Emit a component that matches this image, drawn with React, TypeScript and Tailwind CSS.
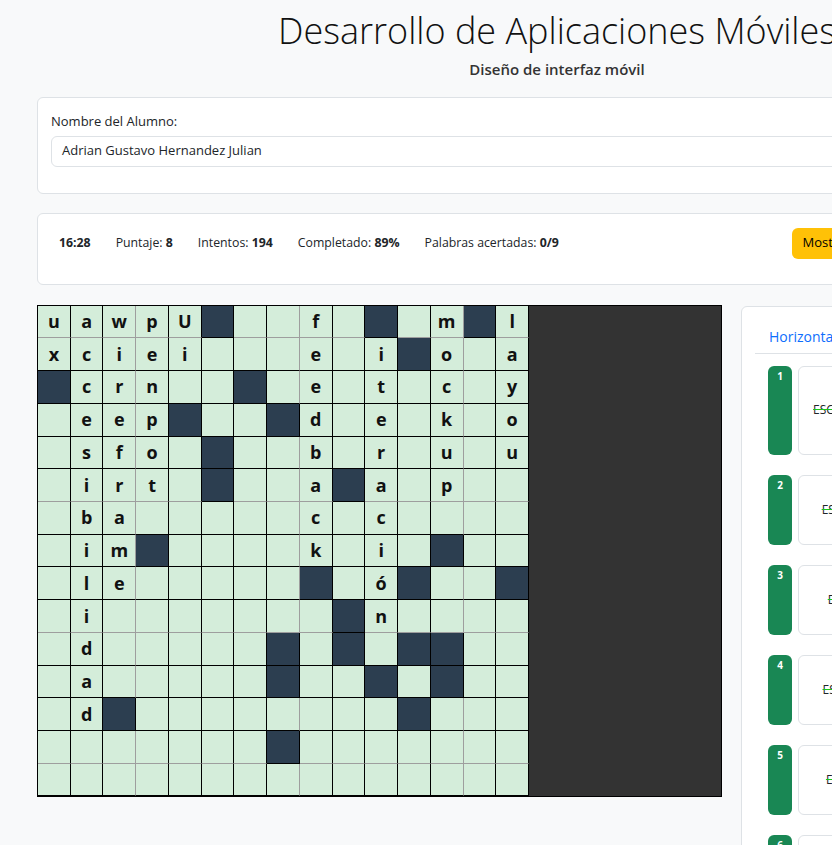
import React from "react"

const rows = [
  "uawpU#__f_#_m#l",
  "xciei___e_i#o_a",
  "#crn__#_e_t_c_y",
  "_eep#__#d_e_k_o",
  "_sfo_#__b_r_u_u",
  "_irt_#__a#a_p__",
  "_ba_____c_c____",
  "_im#____k_i_#__",
  "_le_____#_ó#__#",
  "_i_______#n____",
  "_d_____#_#_##__",
  "_a_____#__#_#__",
  "_d#________#___",
  "_______#_______",
  "_______________",
]

// lines that the browser draws lighter in the original
const grayCols = [2, 7, 12]
const grayRows = [0, 5, 9, 13]

const clues = [
  { n: 1, text: "ESCENARIOS DE PRUEBAS CON USUARIOS", tall: true },
  { n: 2, text: "ESTRUCTURA GRÁFICA DE LA INTERFAZ", tall: false },
  { n: 3, text: "ELEMENTOS DE LA EXPERIENCIA (UX)", tall: false },
  { n: 4, text: "ESQUEMA BÁSICO DE CADA PANTALLA", tall: false },
  { n: 5, text: "ESBOZO INICIAL DE UNA APLICACIÓN", tall: false },
  { n: 6, text: "ELEMENTO VISUAL", tall: false },
]

const Cell: React.FC<{ ch: string; r: number; c: number }> = ({ ch, r, c }) => {
  const dark = ch === "#"
  const right = !dark && grayCols.includes(c) ? "border-r-[#9e9e9e]" : "border-r-black"
  const bottom = !dark && grayRows.includes(r) ? "border-b-[#9e9e9e]" : "border-b-black"
  return (
    <div
      className={`h-[32.73px] border-r border-b ${right} ${bottom} flex items-center justify-center text-[18px] font-bold text-[#111] ${
        dark ? "bg-[#2c3e50]" : "bg-[#d4edda]"
      }`}
    >
      {ch === "#" || ch === "_" ? "" : ch}
    </div>
  )
}

const App: React.FC = () => {
  return (
    <div
      className="w-screen h-screen overflow-hidden bg-[#f8f9fa] text-[#212529]"
      style={{ fontFamily: '"Open Sans", "Noto Sans", sans-serif' }}
    >
      <div className="w-[1114px] px-[37px]">
        <div className="text-center pt-[9px]">
          <h1 className="text-[36px] font-light leading-[1.2] text-[#111]">
            Desarrollo de Aplicaciones Móviles
          </h1>
          <p className="mt-[6px] text-[15px] font-semibold text-[#333]">Diseño de interfaz móvil</p>
        </div>

        <div className="mt-[16px] bg-white border border-[#dee2e6] rounded-md px-[13px] pt-[13px] pb-[26px]">
          <label className="block text-[13px] leading-[21px] mb-[4px]">Nombre del Alumno:</label>
          <div className="h-[31px] border border-[#dee2e6] rounded-md flex items-center px-[10px] text-[13px]">
            Adrian Gustavo Hernandez Julian
          </div>
        </div>

        <div className="mt-[19px] bg-white border border-[#dee2e6] rounded-md px-[13px] pt-[14px] pb-[25px]">
          <div className="flex items-center h-[31px]">
            <div className="flex items-center gap-[25px] pl-[8px] text-[12.3px]">
              <span className="font-bold">16:28</span>
              <span>
                Puntaje: <b>8</b>
              </span>
              <span>
                Intentos: <b>194</b>
              </span>
              <span>
                Completado: <b>89%</b>
              </span>
              <span>
                Palabras acertadas: <b>0/9</b>
              </span>
            </div>
            <div className="ml-auto flex gap-2">
              <button className="h-[31px] px-[11px] rounded-md bg-[#ffc107] text-[13px] text-black">
                Mostrar Respuestas
              </button>
              <button className="h-[31px] px-[16px] rounded-md bg-[#6c757d] text-[13px] text-white">
                Reiniciar Juego
              </button>
            </div>
          </div>
        </div>

        <div className="mt-[20px] flex gap-[19px] items-start">
          <div className="w-[685px] shrink-0 border border-black bg-[#333]">
            <div className="grid grid-cols-[repeat(15,minmax(0,1fr))] w-[491px]">
              {rows.map((row, r) =>
                Array.from(row).map((ch, c) => <Cell key={`${r}-${c}`} ch={ch} r={r} c={c} />)
              )}
            </div>
          </div>

          <div className="flex-1 bg-white border border-[#dee2e6] rounded-md p-[13px] mt-px">
            <div className="flex border-b border-[#dee2e6]">
              <span className="px-[14px] py-[6px] text-[14px] text-[#0d6efd]">Horizontal</span>
              <span className="px-[14px] py-[6px] text-[14px] text-[#0d6efd]">Vertical</span>
            </div>
            <div className="mt-[12px] pl-[13px] flex flex-col gap-[20px]">
              {clues.map((cl) => (
                <div key={cl.n} className={`flex gap-[6px] ${cl.tall ? "h-[89px]" : "h-[70px]"}`}>
                  <div className="w-[24px] shrink-0 rounded-md bg-[#198754] text-white text-[10px] font-bold text-center pt-[3px]">
                    {cl.n}
                  </div>
                  <div className="flex-1 border border-[#dee2e6] rounded-md flex items-center justify-center text-[12px] line-through decoration-[#19c819]">
                    {cl.text}
                  </div>
                </div>
              ))}
            </div>
          </div>
        </div>
      </div>
    </div>
  )
}

export default App
